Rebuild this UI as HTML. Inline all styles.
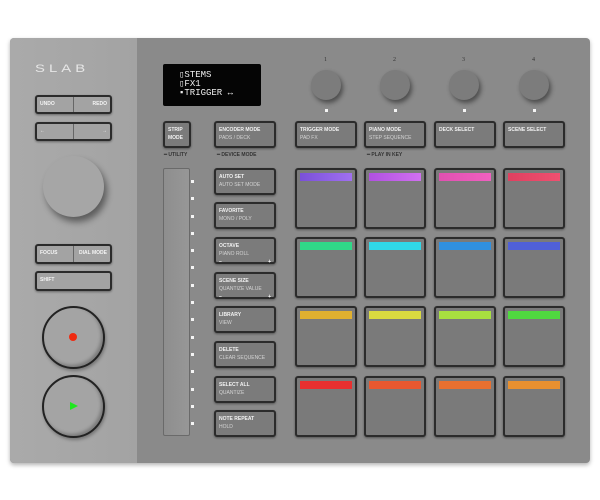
<!DOCTYPE html><html><head><style>
*{margin:0;padding:0;box-sizing:border-box}
body{width:600px;height:500px;background:#fff;position:relative;overflow:hidden;font-family:"Liberation Sans",sans-serif}
.dev{position:absolute;left:10px;top:38px;width:580px;height:425px;background:#8a8a8a;border-radius:4px;box-shadow:0 2px 4px rgba(0,0,0,.3)}
.lp{position:absolute;left:10px;top:38px;width:128px;height:425px;background:linear-gradient(90deg,#aaa,#a3a3a3);border-radius:4px 0 0 4px;border-right:1px solid #8a8a8a}
.b{position:absolute;background:#7b7b7b;border:2px solid #2b2b2b;border-radius:3px;color:#f2f2f2;font-size:5px;font-weight:bold;padding:3px 3px;line-height:8px;box-shadow:0 1px 2px rgba(0,0,0,.4)}
.b i{display:block;font-style:normal;color:#d4d4d4;font-weight:normal}
.lb{background:#a3a3a3;color:#f4f4f4}
.pad{position:absolute;width:62px;height:61px;background:#7a7a7a;border:2px solid #2b2b2b;border-radius:3px;box-shadow:0 1px 2px rgba(0,0,0,.4)}
.pad span{position:absolute;left:3px;right:3px;top:3px;height:8px}
.k{position:absolute;width:30px;height:30px;border-radius:50%;background:#7c7c7c;box-shadow:2px 3px 5px rgba(0,0,0,.45)}
.n{position:absolute;font-size:6px;color:#333;font-family:"Liberation Serif",serif}
.d{position:absolute;width:3px;height:3px;background:#f4f4f4}
.lab{position:absolute;font-size:5px;color:#333;font-weight:bold}
</style></head><body>
<div class="dev"></div><div class="lp"></div>
<div style="position:absolute;left:35px;top:63px;font-size:11px;letter-spacing:3px;color:#e6e6e6;transform:scaleX(1.35);transform-origin:left">SLAB</div>
<div class="b lb" style="left:35px;top:95px;width:77px;height:19px">UNDO<span style="position:absolute;right:3px;top:3px">REDO</span><div style="position:absolute;left:36px;top:0;bottom:0;border-left:1px solid #666"></div></div>
<div class="b lb" style="left:35px;top:122px;width:77px;height:19px">←<span style="position:absolute;right:3px;top:3px">→</span><div style="position:absolute;left:36px;top:0;bottom:0;border-left:1px solid #666"></div></div>
<div style="position:absolute;left:43px;top:156px;width:61px;height:61px;border-radius:50%;background:#a6a6a6;box-shadow:3px 5px 7px rgba(0,0,0,.45)"></div>
<div class="b lb" style="left:35px;top:244px;width:77px;height:20px">FOCUS<span style="position:absolute;right:3px;top:3px">DIAL MODE</span><div style="position:absolute;left:36px;top:0;bottom:0;border-left:1px solid #666"></div></div>
<div class="b lb" style="left:35px;top:271px;width:77px;height:20px">SHIFT</div>
<div style="position:absolute;left:42px;top:306px;width:63px;height:63px;border-radius:50%;border:2px solid #222;background:#a4a4a4;box-shadow:inset -2px -2px 3px rgba(0,0,0,.25),1px 2px 3px rgba(0,0,0,.3)"></div>
<div style="position:absolute;left:69px;top:333px;width:8px;height:8px;border-radius:50%;background:#f02a10"></div>
<div style="position:absolute;left:42px;top:375px;width:63px;height:63px;border-radius:50%;border:2px solid #222;background:#a4a4a4;box-shadow:inset -2px -2px 3px rgba(0,0,0,.25),1px 2px 3px rgba(0,0,0,.3)"></div>
<div style="position:absolute;left:70px;top:402px;width:0;height:0;border-left:8px solid #1ee81e;border-top:4.5px solid transparent;border-bottom:4.5px solid transparent"></div>
<div style="position:absolute;left:163px;top:64px;width:98px;height:42px;background:#050505;border-radius:2px;color:#eee;font-family:'Liberation Mono',monospace;font-size:9px;line-height:9px;padding:7px 0 0 16px">▯STEMS<br>▯FX1<br>▪TRIGGER ↔</div>
<div class="b" style="left:163px;top:121px;width:28px;height:27px">STRIP<br>MODE</div>
<div class="lab" style="left:164px;top:152px">━ UTILITY</div>
<div class="b" style="left:214px;top:121px;width:62px;height:27px">ENCODER MODE<i>PADS / DECK</i></div>
<div class="lab" style="left:217px;top:152px">━ DEVICE MODE</div>
<div style="position:absolute;left:163px;top:168px;width:27px;height:268px;border:1px solid #6a6a6a;border-radius:2px;background:linear-gradient(90deg,#8e8e8e,#979797)"></div>
<div class="b" style="left:214px;top:168px;width:62px;height:27px">AUTO SET<i>AUTO SET MODE</i></div>
<div class="b" style="left:214px;top:202px;width:62px;height:27px">FAVORITE<i>MONO / POLY</i></div>
<div class="b" style="left:214px;top:237px;width:62px;height:27px">OCTAVE<i>PIANO ROLL</i><i style="font-weight:bold;color:#fff">–<span style="float:right">+</span></i></div>
<div class="b" style="left:214px;top:272px;width:62px;height:27px">SCENE SIZE<i>QUANTIZE VALUE</i><i style="font-weight:bold;color:#fff">–<span style="float:right">+</span></i></div>
<div class="b" style="left:214px;top:306px;width:62px;height:27px">LIBRARY<i>VIEW</i></div>
<div class="b" style="left:214px;top:341px;width:62px;height:27px">DELETE<i>CLEAR SEQUENCE</i></div>
<div class="b" style="left:214px;top:376px;width:62px;height:27px">SELECT ALL<i>QUANTIZE</i></div>
<div class="b" style="left:214px;top:410px;width:62px;height:27px">NOTE REPEAT<i>HOLD</i></div>
<div class="n" style="left:324px;top:57px">1</div><div class="n" style="left:393px;top:57px">2</div><div class="n" style="left:462px;top:57px">3</div><div class="n" style="left:532px;top:57px">4</div>
<div class="k" style="left:311px;top:70px"></div><div class="k" style="left:380px;top:70px"></div><div class="k" style="left:449px;top:70px"></div><div class="k" style="left:519px;top:70px"></div>
<div class="d" style="left:325px;top:109px"></div><div class="d" style="left:394px;top:109px"></div><div class="d" style="left:463px;top:109px"></div><div class="d" style="left:533px;top:109px"></div>
<div class="b" style="left:295px;top:121px;width:62px;height:27px">TRIGGER MODE<i>PAD FX</i></div>
<div class="b" style="left:364px;top:121px;width:62px;height:27px">PIANO MODE<i>STEP SEQUENCE</i></div>
<div class="b" style="left:434px;top:121px;width:62px;height:27px">DECK SELECT</div>
<div class="b" style="left:503px;top:121px;width:62px;height:27px">SCENE SELECT</div>
<div class="lab" style="left:367px;top:152px">━ PLAY IN KEY</div>
<div class="pad" style="left:295px;top:168px"><span style="background:linear-gradient(90deg,#7a50d8,#a070f0)"></span></div>
<div class="pad" style="left:364px;top:168px"><span style="background:linear-gradient(90deg,#b050e0,#d070f0)"></span></div>
<div class="pad" style="left:434px;top:168px"><span style="background:linear-gradient(90deg,#e050b0,#f060c0)"></span></div>
<div class="pad" style="left:503px;top:168px"><span style="background:linear-gradient(90deg,#e04060,#f05070)"></span></div>
<div class="pad" style="left:295px;top:237px"><span style="background:#30d888"></span></div>
<div class="pad" style="left:364px;top:237px"><span style="background:#30d8e8"></span></div>
<div class="pad" style="left:434px;top:237px"><span style="background:#3090e0"></span></div>
<div class="pad" style="left:503px;top:237px"><span style="background:#5060d8"></span></div>
<div class="pad" style="left:295px;top:306px"><span style="background:#e0b030"></span></div>
<div class="pad" style="left:364px;top:306px"><span style="background:#dada40"></span></div>
<div class="pad" style="left:434px;top:306px"><span style="background:#a8e040"></span></div>
<div class="pad" style="left:503px;top:306px"><span style="background:#50d840"></span></div>
<div class="pad" style="left:295px;top:376px"><span style="background:#e83030"></span></div>
<div class="pad" style="left:364px;top:376px"><span style="background:#e85830"></span></div>
<div class="pad" style="left:434px;top:376px"><span style="background:#e87030"></span></div>
<div class="pad" style="left:503px;top:376px"><span style="background:#e89030"></span></div>
<div class="d" style="left:191px;top:180px"></div><div class="d" style="left:191px;top:197px"></div><div class="d" style="left:191px;top:215px"></div><div class="d" style="left:191px;top:232px"></div><div class="d" style="left:191px;top:249px"></div><div class="d" style="left:191px;top:266px"></div><div class="d" style="left:191px;top:284px"></div><div class="d" style="left:191px;top:301px"></div><div class="d" style="left:191px;top:318px"></div><div class="d" style="left:191px;top:336px"></div><div class="d" style="left:191px;top:353px"></div><div class="d" style="left:191px;top:370px"></div><div class="d" style="left:191px;top:388px"></div><div class="d" style="left:191px;top:405px"></div><div class="d" style="left:191px;top:422px"></div>
</body></html>
